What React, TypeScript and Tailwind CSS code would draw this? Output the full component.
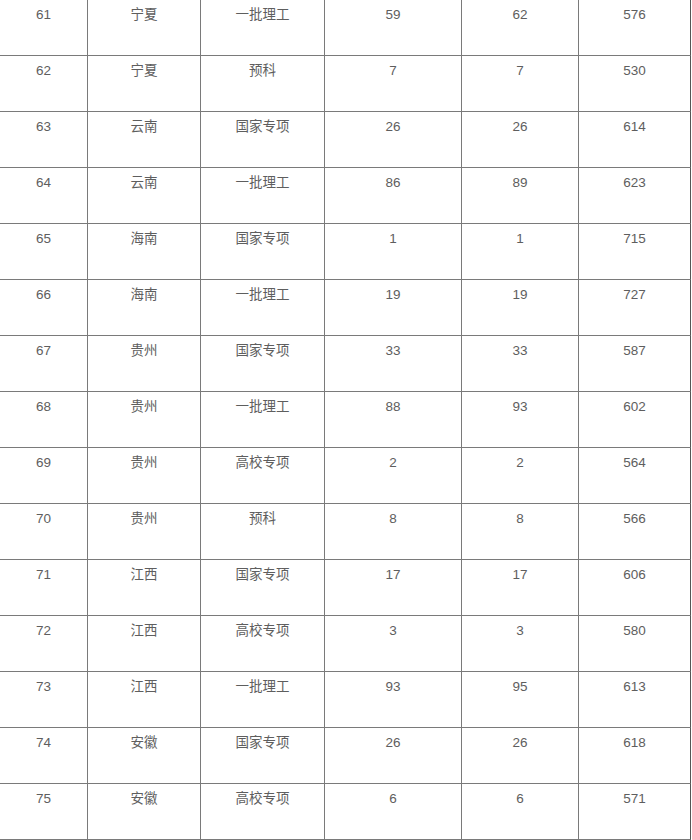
const rows: [string, string, string, string, string, string][] = [
  ["61", "宁夏", "一批理工", "59", "62", "576"],
  ["62", "宁夏", "预科", "7", "7", "530"],
  ["63", "云南", "国家专项", "26", "26", "614"],
  ["64", "云南", "一批理工", "86", "89", "623"],
  ["65", "海南", "国家专项", "1", "1", "715"],
  ["66", "海南", "一批理工", "19", "19", "727"],
  ["67", "贵州", "国家专项", "33", "33", "587"],
  ["68", "贵州", "一批理工", "88", "93", "602"],
  ["69", "贵州", "高校专项", "2", "2", "564"],
  ["70", "贵州", "预科", "8", "8", "566"],
  ["71", "江西", "国家专项", "17", "17", "606"],
  ["72", "江西", "高校专项", "3", "3", "580"],
  ["73", "江西", "一批理工", "93", "95", "613"],
  ["74", "安徽", "国家专项", "26", "26", "618"],
  ["75", "安徽", "高校专项", "6", "6", "571"],
];

export default function App() {
  return (
    <div
      className="h-[840px] w-[692px] overflow-hidden bg-white text-[13.5px] leading-[20px] text-[#5e5e5e]"
      style={{ fontFamily: '"Liberation Sans", "Noto Sans CJK SC", sans-serif' }}
    >
      <div className="grid grid-cols-[88px_113px_124px_137px_117px_112px]">
        {rows.map((row, i) =>
          row.map((cell, j) => (
            <div
              key={`${i}-${j}`}
              className={`h-[56px] border-b border-r pt-[5px] text-center ${
                j === 5 ? "border-b-[#7a7a7a] border-r-[#555555]" : "border-[#7a7a7a]"
              }`}
            >
              {cell}
            </div>
          ))
        )}
      </div>
    </div>
  );
}
